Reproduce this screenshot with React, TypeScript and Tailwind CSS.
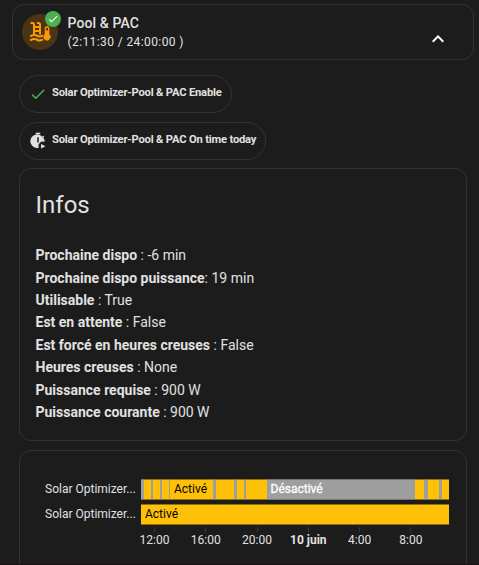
import React from 'react';

const infos = [
  { label: 'Prochaine dispo', sep: ' : ', value: '-6 min' },
  { label: 'Prochaine dispo puissance', sep: ': ', value: '19 min' },
  { label: 'Utilisable', sep: ' : ', value: 'True' },
  { label: 'Est en attente', sep: ' : ', value: 'False' },
  { label: 'Est forcé en heures creuses', sep: ' : ', value: 'False' },
  { label: 'Heures creuses', sep: ' : ', value: 'None' },
  { label: 'Puissance requise', sep: ' : ', value: '900 W' },
  { label: 'Puissance courante', sep: ' : ', value: '900 W' },
];

interface Segment {
  on: boolean;
  width: number;
  label?: string;
}

const enableHistory: Segment[] = [
  { on: false, width: 3 },
  { on: true, width: 6.5 },
  { on: false, width: 2.5 },
  { on: true, width: 6.5 },
  { on: false, width: 2.5 },
  { on: true, width: 6.5 },
  { on: false, width: 1.5 },
  { on: true, width: 43, label: 'Activé' },
  { on: false, width: 2.5 },
  { on: true, width: 18.5 },
  { on: false, width: 2.5 },
  { on: true, width: 7 },
  { on: false, width: 2.5 },
  { on: true, width: 20.5 },
  { on: false, width: 148.5, label: 'Désactivé' },
  { on: true, width: 9 },
  { on: false, width: 3.5 },
  { on: true, width: 11 },
  { on: false, width: 3 },
  { on: true, width: 7.5 },
];

const activeHistory: Segment[] = [{ on: true, width: 308, label: 'Activé' }];

const ticks = ['12:00', '16:00', '20:00', '10 juin', '4:00', '8:00'];

function PoolThermometerIcon() {
  return (
    <svg viewBox="0 0 24 24" className="h-6 w-6" fill="none" stroke="#ff9800" strokeWidth="2">
      {/* ladder */}
      <path d="M2.500 3H4.500A1.500 1.500 0 0 1 6 4.500V14.500M9 3h1.500A1.500 1.500 0 0 1 12 4.500V14.500M6 7h6M6 11h6" />
      {/* water */}
      <path d="M2 16.300c2-.9 3-1.300 4.500-1.300 2 0 3 1.500 5 1.500 1.200 0 2.200-.5 3.500-1.200M2 20.300c2-.9 3-1.300 4.500-1.300 2 0 3 1.500 5 1.500 1.200 0 2.200-.5 3.500-1.200" />
      {/* thermometer */}
      <path
        d="M19 6a2.300 2.300 0 0 0-2.300 2.300v6a3.500 3.500 0 1 0 4.600 0v-6A2.300 2.300 0 0 0 19 6m0 1.500c.5 0 .9.4.9.9v2.100h-1.800V8.400c0-.5.4-.9.9-.9"
        fill="#ff9800"
        stroke="none"
      />
    </svg>
  );
}

function CheckIcon({ className }: { className: string }) {
  return (
    <svg viewBox="0 0 24 24" className={className} fill="currentColor">
      <path d="M21 7 9 19l-5.500-5.500 1.410-1.410L9 16.170 19.590 5.590z" />
    </svg>
  );
}

function TimerPlayIcon() {
  return (
    <svg viewBox="0 0 24 24" className="h-[18px] w-[18px]" fill="currentColor">
      <path fillRule="evenodd" d="M9 1h6v2H9zM19 4.900l1.400 1.500-1.400 1.400A9 9 0 0 1 21 13.100 6 6 0 0 0 13.100 20.900 9 9 0 1 1 17.600 6.300zM11 7v7h2V7z" />
      <path d="m16 16 6 3-6 3z" />
    </svg>
  );
}

function Chip({ icon, label }: { icon: React.ReactNode; label: string }) {
  return (
    <div className="flex h-[38px] w-fit items-center gap-[5px] rounded-full border border-[#333] px-[9px]">
      {icon}
      <span className="pb-[2px] text-[11.2px] leading-4 font-bold tracking-[-0.19px] whitespace-nowrap">{label}</span>
    </div>
  );
}

function TimelineRow({ segments }: { segments: Segment[] }) {
  return (
    <div className="flex h-[21px] items-stretch">
      <span className="w-[93px] shrink-0 text-xs leading-5">Solar Optimizer...</span>
      <div className="ml-[3px] flex w-[308px]">
        {segments.map((s, i) => (
          <div
            key={i}
            style={{ width: s.width }}
            className={`shrink-0 border-y text-xs leading-[19px] ${
              s.on
                ? 'border-[#94700a] bg-[#ffc107] text-black'
                : 'border-[#77756f] bg-[#9e9e9e] text-white [-webkit-text-stroke:0.3px_white]'
            } ${s.label ? 'pl-1' : ''}`}
          >
            {s.label}
          </div>
        ))}
      </div>
    </div>
  );
}

export default function App() {
  return (
    <div className="h-[565px] overflow-hidden border-b border-[#181214] bg-[#1c1c1c] pt-1 font-[Roboto,sans-serif] text-[#e1e1e1]">
      {/* Device header */}
      <div className="ml-3 flex h-14 w-[462px] rounded-xl border border-[#333] pt-[9px] pl-[9px]">
        <div className="relative flex h-9 w-9 items-center justify-center rounded-full bg-[#493416]">
          <PoolThermometerIcon />
          <div className="absolute -top-[3px] -right-[3px] flex h-4 w-4 items-center justify-center rounded-full bg-[#4caf50] text-white">
            <CheckIcon className="h-3 w-3" />
          </div>
        </div>
        <div className="ml-[9.500px]">
          <div className="text-sm leading-[19px] font-medium tracking-[0.1px]">Pool &amp; PAC</div>
          <div className="text-xs leading-[18px] tracking-[0.4px]">(2:11:30 / 24:00:00 )</div>
        </div>
        <svg viewBox="0 0 24 24" className="mt-[13px] mr-[23px] ml-auto h-6 w-6" fill="white">
          <path d="M7.410 15.410 12 10.830l4.590 4.580L18 14l-6-6-6 6z" />
        </svg>
      </div>

      <div className="mt-[15px] ml-[19px] flex w-[448px] flex-col gap-[9px]">
        <Chip icon={<CheckIcon className="h-[18px] w-[18px] text-[#4caf50]" />} label="Solar Optimizer-Pool & PAC Enable" />
        <Chip icon={<TimerPlayIcon />} label="Solar Optimizer-Pool & PAC On time today" />

        {/* Infos */}
        <div className="-mt-px h-[273px] rounded-xl border border-[#333] px-[15.500px]">
          <h1 className="pt-3 text-2xl leading-[48px]">Infos</h1>
          <div className="mt-[15.200px] text-sm leading-[22.4px]">
            {infos.map((info) => (
              <div key={info.label} className="whitespace-pre">
                <b className="font-bold">{info.label}</b>
                {info.sep}
                {info.value}
              </div>
            ))}
          </div>
        </div>

        {/* History */}
        <div className="h-[140px] rounded-xl border border-[#333] pt-7 pl-[25px]">
          <div className="flex flex-col gap-1">
            <TimelineRow segments={enableHistory} />
            <TimelineRow segments={activeHistory} />
          </div>
          <div className="mt-0.5 ml-[83.800px] flex">
            {ticks.map((tick) => (
              <div key={tick} className="flex w-[51.300px] flex-col items-center">
                <div className="h-[5px] w-px bg-[#383838]" />
                <span className={`text-xs leading-4 ${tick === '10 juin' ? 'font-bold' : ''}`}>{tick}</span>
              </div>
            ))}
          </div>
        </div>
      </div>
    </div>
  );
}
